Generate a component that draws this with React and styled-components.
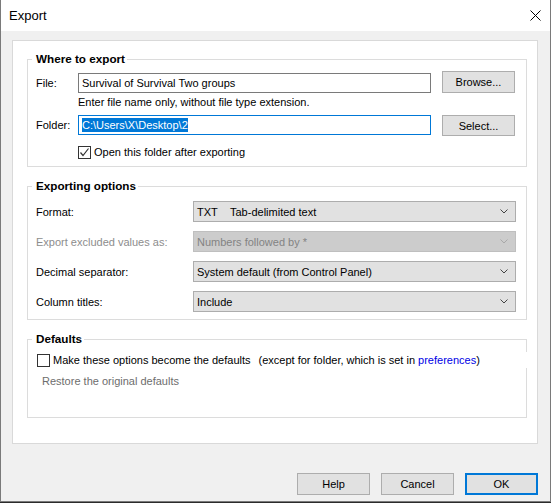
import React from "react";
import styled, { createGlobalStyle } from "styled-components";

const GlobalStyle = createGlobalStyle`
    html, body {
        margin: 0;
        padding: 0;
        background: #2b2b2b;
    }
    * {
        box-sizing: border-box;
    }
`;

const Window = styled.div`
    width: 551px;
    height: 502px;
    display: flex;
    flex-direction: column;
    background: #f0f0f0;
    border-left: 1px solid #7a7a7a;
    border-right: 1px solid #7a7a7a;
    border-bottom: 1px solid #7a7a7a;
    font-family: "Liberation Sans", Arial, sans-serif;
    font-size: 11px;
    color: #000;
`;

const TitleBar = styled.div`
    height: 31px;
    background: #fff;
    display: flex;
    align-items: center;
    justify-content: space-between;
    padding: 0 9px 0 8px;
    font-size: 13px;
`;

const Body = styled.div`
    flex: 1;
    padding: 9px 12px 0 11px;
    display: flex;
    flex-direction: column;
`;

const Panel = styled.div`
    height: 404px;
    background: #fff;
    border: 1px solid #d9d9d9;
    padding: 10px 10px 0 14px;
`;

const Group = styled.fieldset`
    margin: ${({ $mt }) => $mt || 0}px 0 0;
    padding: ${({ $pt }) => $pt}px 10px ${({ $pb }) => $pb}px 8px;
    border: 1px solid #dcdcdc;
    min-width: 0;
`;

const Legend = styled.legend`
    margin-left: -4px;
    padding: 0 2px 0 4px;
    font-size: 11.7px;
    font-weight: bold;
    line-height: 16px;
`;

const FieldRow = styled.div`
    display: flex;
    align-items: ${({ $align }) => $align || "center"};
    gap: 11px;
    margin-top: ${({ $mt }) => $mt || 0}px;
`;

const Label = styled.span`
    width: ${({ $w }) => $w}px;
    margin-right: -11px;
    line-height: 20px;
    color: ${({ $disabled }) => ($disabled ? "#8d8d8d" : "#000")};
    white-space: nowrap;
`;

const TextBox = styled.div`
    width: 353px;
    height: 20px;
    padding: 0 3px;
    display: flex;
    align-items: center;
    border: 1px solid ${({ $focused }) => ($focused ? "#0078d7" : "#7a7a7a")};
    background: #fff;
    white-space: nowrap;
`;

const Selected = styled.span`
    background: #0078d7;
    color: #fff;
    line-height: 14px;
`;

const Button = styled.button`
    width: 73px;
    height: ${({ $h }) => $h || 22}px;
    padding: 0;
    font: inherit;
    color: #000;
    background: #e1e1e1;
    border: ${({ $primary }) => ($primary ? "2px solid #0078d7" : "1px solid #adadad")};
`;

const Hint = styled.div`
    margin: 1px 0 0 42px;
    line-height: 16px;
`;

const CheckRow = styled.label`
    display: flex;
    align-items: center;
    gap: 3px;
    line-height: 16px;
    margin: ${({ $m }) => $m};
    background: #fff;
    white-space: nowrap;
`;

const Box = styled.span`
    width: 13px;
    height: 13px;
    border: 1px solid #333;
    background: #fff;
    display: flex;
    align-items: center;
    justify-content: center;
`;

const Note = styled.span`
    margin-left: 5px;
`;

const Link = styled.span`
    color: #0000e6;
`;

const OptionList = styled.div`
    display: flex;
    flex-direction: column;
    gap: 9px;
`;

const Combo = styled.div`
    width: 323px;
    height: 21px;
    padding: 0 7px 0 3px;
    display: flex;
    align-items: center;
    justify-content: space-between;
    background: ${({ $disabled }) => ($disabled ? "#cccccc" : "#e1e1e1")};
    border: 1px solid ${({ $disabled }) => ($disabled ? "#bfbfbf" : "#adadad")};
    color: ${({ $disabled }) => ($disabled ? "#838383" : "#000")};
    white-space: nowrap;
`;

const Code = styled.span`
    display: inline-block;
    width: 33px;
`;

const Muted = styled.div`
    margin: 5px 0 0 6px;
    line-height: 16px;
    color: #6d6d6d;
`;

const Footer = styled.div`
    margin-top: 29px;
    display: flex;
    justify-content: flex-end;
    gap: 11px;
`;

function Chevron({ disabled }) {
    return (
        <svg width="8" height="5" viewBox="0 0 8 5">
            <polyline points="0.5,0.5 4,4 7.5,0.5" fill="none" stroke={disabled ? "#a8a8a8" : "#444"} strokeWidth="1" />
        </svg>
    );
}

function CheckBox({ checked }) {
    return (
        <Box>
            {checked && (
                <svg width="11" height="11" viewBox="0 0 11 11">
                    <polyline points="1.5,5.5 4,8.5 9.5,1.5" fill="none" stroke="#333" strokeWidth="1.2" />
                </svg>
            )}
        </Box>
    );
}

const options = [
    { label: "Format:", value: <><Code>TXT</Code>Tab-delimited text</> },
    { label: "Export excluded values as:", value: "Numbers followed by *", disabled: true },
    { label: "Decimal separator:", value: "System default (from Control Panel)" },
    { label: "Column titles:", value: "Include" },
];

export default function App() {
    return (
        <>
            <GlobalStyle />
            <Window>
                <TitleBar>
                    <span>Export</span>
                    <svg width="11" height="11" viewBox="0 0 11 11">
                        <path d="M0.5 0.5 L10.5 10.5 M10.5 0.5 L0.5 10.5" stroke="#000" strokeWidth="1" />
                    </svg>
                </TitleBar>
                <Body>
                    <Panel>
                        <Group $pt={4} $pb={6}>
                            <Legend>Where to export</Legend>
                            <FieldRow $align="flex-end">
                                <Label $w={42}>File:</Label>
                                <TextBox>Survival of Survival Two groups</TextBox>
                                <Button>Browse...</Button>
                            </FieldRow>
                            <Hint>Enter file name only, without file type extension.</Hint>
                            <FieldRow $align="flex-start" $mt={5}>
                                <Label $w={42}>Folder:</Label>
                                <TextBox $focused>
                                    <Selected>C:\Users\X\Desktop\2</Selected>
                                </TextBox>
                                <Button $h={21}>Select...</Button>
                            </FieldRow>
                            <CheckRow $m="8px 0 0 42px">
                                <CheckBox checked />
                                Open this folder after exporting
                            </CheckRow>
                        </Group>

                        <Group $mt={11} $pt={7} $pb={7}>
                            <Legend>Exporting options</Legend>
                            <OptionList>
                                {options.map((opt) => (
                                    <FieldRow key={opt.label}>
                                        <Label $w={157} $disabled={opt.disabled}>{opt.label}</Label>
                                        <Combo $disabled={opt.disabled}>
                                            <span>{opt.value}</span>
                                            <Chevron disabled={opt.disabled} />
                                        </Combo>
                                    </FieldRow>
                                ))}
                            </OptionList>
                        </Group>

                        <Group $mt={11} $pt={5} $pb={28}>
                            <Legend>Defaults</Legend>
                            <CheckRow $m="0 -12px 0 1px">
                                <CheckBox />
                                Make these options become the defaults
                                <Note>
                                    (except for folder, which is set in <Link>preferences</Link>)
                                </Note>
                            </CheckRow>
                            <Muted>Restore the original defaults</Muted>
                        </Group>
                    </Panel>
                    <Footer>
                        <Button>Help</Button>
                        <Button>Cancel</Button>
                        <Button $primary>OK</Button>
                    </Footer>
                </Body>
            </Window>
        </>
    );
}
